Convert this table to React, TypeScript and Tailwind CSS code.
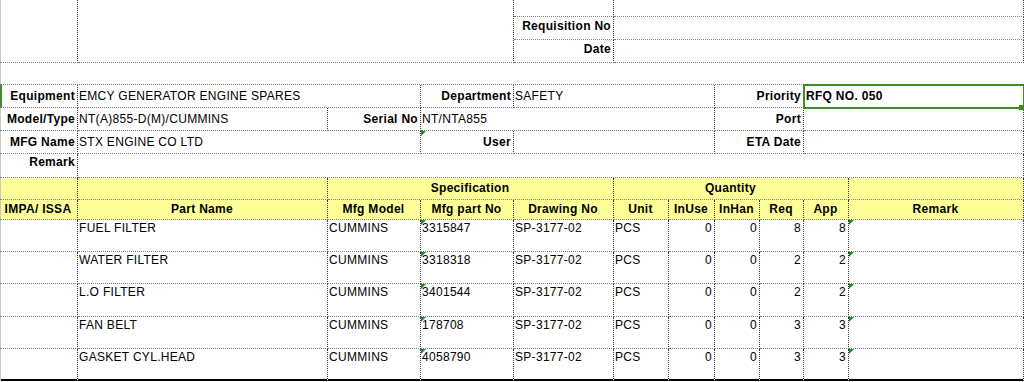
import React from "react";

const base =
  "relative flex border-r border-b border-dotted border-r-[#333333] border-b-[#808080] pl-[1px] pr-[2px] whitespace-nowrap";
const edge = "shadow-[inset_1px_0_0_#c8c8c8]";
const yellow = "bg-[#ffff99]";

function Tri() {
  return (
    <span className="absolute left-0 top-0 h-0 w-0 border-t-[5px] border-r-[5px] border-t-[#1e8a1e] border-r-transparent" />
  );
}

type Row = [string, string, string, string, string, number, number, number, number];

const rows: Row[] = [
  ["FUEL FILTER", "CUMMINS", "3315847", "SP-3177-02", "PCS", 0, 0, 8, 8],
  ["WATER FILTER", "CUMMINS", "3318318", "SP-3177-02", "PCS", 0, 0, 2, 2],
  ["L.O FILTER", "CUMMINS", "3401544", "SP-3177-02", "PCS", 0, 0, 2, 2],
  ["FAN BELT", "CUMMINS", "178708", "SP-3177-02", "PCS", 0, 0, 3, 3],
  ["GASKET CYL.HEAD", "CUMMINS", "4058790", "SP-3177-02", "PCS", 0, 0, 3, 3],
];

export default function App() {
  return (
    <div className="h-[382px] w-[1024px] overflow-hidden bg-white text-[12px] leading-[14px] tracking-[0.3px] text-black font-['Liberation_Sans',Arial,sans-serif]">
      <div className="grid grid-cols-[78px_250px_93px_93px_100px_55px_46px_45px_44px_45px_175px] grid-rows-[17px_23px_23px_22px_23px_23px_23px_24px_22px_20px_32px_32px_33px_32px_32px]">
        {/* top block */}
        <div className={`${base} row-span-3 ${edge}`} />
        <div className={`${base} col-span-3 row-span-3`} />
        <div className={base} />
        <div className={`${base} col-span-6`} />
        <div className={`${base} items-center justify-end pb-[4px] font-bold`}>Requisition No</div>
        <div className={`${base} col-span-6`} />
        <div className={`${base} items-center justify-end pb-[4px] font-bold`}>Date</div>
        <div className={`${base} col-span-6`} />

        {/* blank row */}
        <div className={`${base} col-span-11 border-r-0 ${edge}`} />

        {/* Equipment row */}
        <div className={`${base} items-center justify-end font-bold shadow-[inset_2px_0_0_#3e8e26]`}>Equipment</div>
        <div className={`${base} col-span-2 items-center`}>EMCY GENERATOR ENGINE SPARES</div>
        <div className={`${base} items-center justify-end font-bold`}>Department</div>
        <div className={`${base} col-span-3 items-center`}>SAFETY</div>
        <div className={`${base} col-span-2 items-center justify-end font-bold`}>Priority</div>
        <div className={`${base} col-span-2 z-10 items-center pl-[2px] font-bold outline-2 outline-[#3e8e26] -outline-offset-1`}>
          RFQ NO. 050
          <span className="absolute bottom-[-3px] right-[-1px] h-[5px] w-[5px] bg-[#3e8e26]" />
        </div>

        {/* Model row */}
        <div className={`${base} items-center justify-end font-bold ${edge}`}>Model/Type</div>
        <div className={`${base} items-center`}>NT(A)855-D(M)/CUMMINS</div>
        <div className={`${base} items-center justify-end font-bold`}>Serial No</div>
        <div className={`${base} col-span-4 items-center`}>NT/NTA855</div>
        <div className={`${base} col-span-2 items-center justify-end font-bold`}>Port</div>
        <div className={`${base} col-span-2 items-center`} />

        {/* MFG row */}
        <div className={`${base} items-center justify-end font-bold ${edge}`}>MFG Name</div>
        <div className={`${base} col-span-2 items-center`}>STX ENGINE CO LTD</div>
        <div className={`${base} items-center justify-end font-bold`}>
          <Tri />
          User
        </div>
        <div className={`${base} col-span-3 items-center`} />
        <div className={`${base} col-span-2 items-center justify-end font-bold`}>ETA Date</div>
        <div className={`${base} col-span-2 items-center`} />

        {/* Remark row */}
        <div className={`${base} items-start justify-end pt-[1px] font-bold ${edge}`}>Remark</div>
        <div className={`${base} col-span-10`} />

        {/* yellow header 1 */}
        <div className={`${base} ${yellow} ${edge}`} />
        <div className={`${base} ${yellow}`} />
        <div className={`${base} ${yellow} col-span-3 items-center justify-center pb-[2px] font-bold`}>Specification</div>
        <div className={`${base} ${yellow} col-span-5 items-center justify-center pb-[2px] font-bold`}>Quantity</div>
        <div className={`${base} ${yellow}`} />

        {/* yellow header 2 */}
        {["IMPA/ ISSA", "Part Name", "Mfg Model", "Mfg part No", "Drawing No", "Unit", "InUse", "InHan", "Req", "App", "Remark"].map(
          (h, i) => (
            <div
              key={h + i}
              className={`${base} ${yellow} items-center justify-center pb-[2px] font-bold ${i === 0 ? edge : ""}`}
            >
              {h}
            </div>
          )
        )}

        {/* data rows */}
        {rows.map((r, ri) => {
          const last = ri === rows.length - 1;
          const b = last ? "border-b-0" : "";
          const leftShadow = last
            ? "shadow-[inset_1px_0_0_#c8c8c8,inset_0_-2px_0_#000]"
            : edge;
          const bottomShadow = last ? "shadow-[inset_0_-2px_0_#000]" : "";
          return (
            <React.Fragment key={ri}>
              <div className={`${base} ${b} ${leftShadow}`} />
              <div className={`${base} ${b} ${bottomShadow} items-start pt-[1px]`}>{r[0]}</div>
              <div className={`${base} ${b} ${bottomShadow} items-start pt-[1px]`}>{r[1]}</div>
              <div className={`${base} ${b} ${bottomShadow} items-start pt-[1px]`}>
                <Tri />
                {r[2]}
              </div>
              <div className={`${base} ${b} ${bottomShadow} items-start pt-[1px]`}>{r[3]}</div>
              <div className={`${base} ${b} ${bottomShadow} items-start pt-[1px]`}>{r[4]}</div>
              <div className={`${base} ${b} ${bottomShadow} items-start justify-end pt-[1px]`}>{r[5]}</div>
              <div className={`${base} ${b} ${bottomShadow} items-start justify-end pt-[1px]`}>{r[6]}</div>
              <div className={`${base} ${b} ${bottomShadow} items-start justify-end pt-[1px]`}>{r[7]}</div>
              <div className={`${base} ${b} ${bottomShadow} items-start justify-end pt-[1px]`}>{r[8]}</div>
              <div className={`${base} ${b} ${bottomShadow}`}>
                <Tri />
              </div>
            </React.Fragment>
          );
        })}
      </div>
    </div>
  );
}
